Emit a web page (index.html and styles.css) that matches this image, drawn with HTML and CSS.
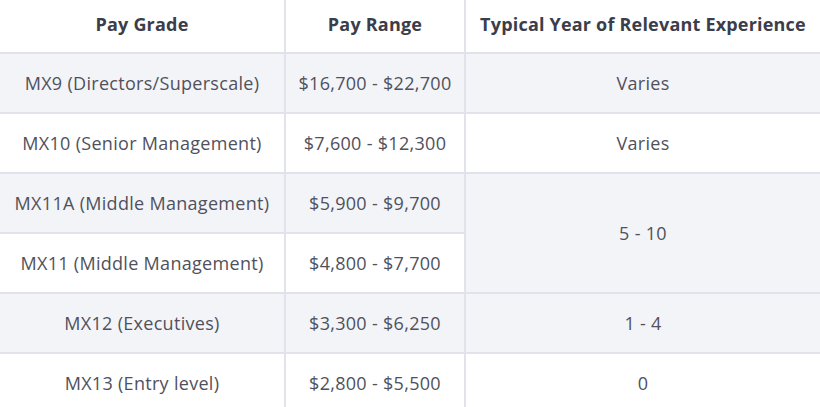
FILE: index.html
```html
<!DOCTYPE html>
<html>
<head>
<meta charset="utf-8">
<link rel="stylesheet" href="styles.css">
</head>
<body>
<table class="pay">
  <colgroup>
    <col class="c1"><col class="c2"><col class="c3">
  </colgroup>
  <thead>
    <tr><th>Pay Grade</th><th>Pay Range</th><th>Typical Year of Relevant Experience</th></tr>
  </thead>
  <tbody>
    <tr class="alt"><td>MX9 (Directors/Superscale)</td><td>$16,700 - $22,700</td><td>Varies</td></tr>
    <tr><td>MX10 (Senior Management)</td><td>$7,600 - $12,300</td><td>Varies</td></tr>
    <tr class="alt"><td>MX11A (Middle Management)</td><td>$5,900 - $9,700</td><td rowspan="2">5 - 10</td></tr>
    <tr><td>MX11 (Middle Management)</td><td>$4,800 - $7,700</td></tr>
    <tr class="alt"><td>MX12 (Executives)</td><td>$3,300 - $6,250</td><td>1 - 4</td></tr>
    <tr><td>MX13 (Entry level)</td><td>$2,800 - $5,500</td><td>0</td></tr>
  </tbody>
</table>
</body>
</html>
```
FILE: styles.css
```css
html, body {
  margin: 0;
  padding: 0;
  background: #ffffff;
  overflow: hidden;
}
.pay {
  width: 820px;
  border-collapse: collapse;
  table-layout: fixed;
  font-family: "Open Sans", "DejaVu Sans", sans-serif;
  font-size: 18px;
  letter-spacing: 0.3px;
  color: #50515c;
}
.c1 { width: 285px; }
.c2 { width: 180px; }
.c3 { width: 355px; }
.pay th, .pay td {
  border: 2px solid #e2e2ea;
  text-align: center;
  vertical-align: middle;
  padding: 0;
  white-space: nowrap;
}
.pay th {
  height: 53px;
  padding-bottom: 5px;
  box-sizing: border-box;
  font-weight: 700;
  letter-spacing: 0.2px;
  color: #3b3d4a;
  border-top: none;
}
.pay td {
  height: 58px;
}
.pay tr > :first-child { border-left: none; }
.pay tr > :last-child { border-right: none; }
.pay tbody tr:nth-child(4) > :last-child { border-right: 2px solid #e2e2ea; }
.pay .alt td { background: #f3f4f8; }
```
